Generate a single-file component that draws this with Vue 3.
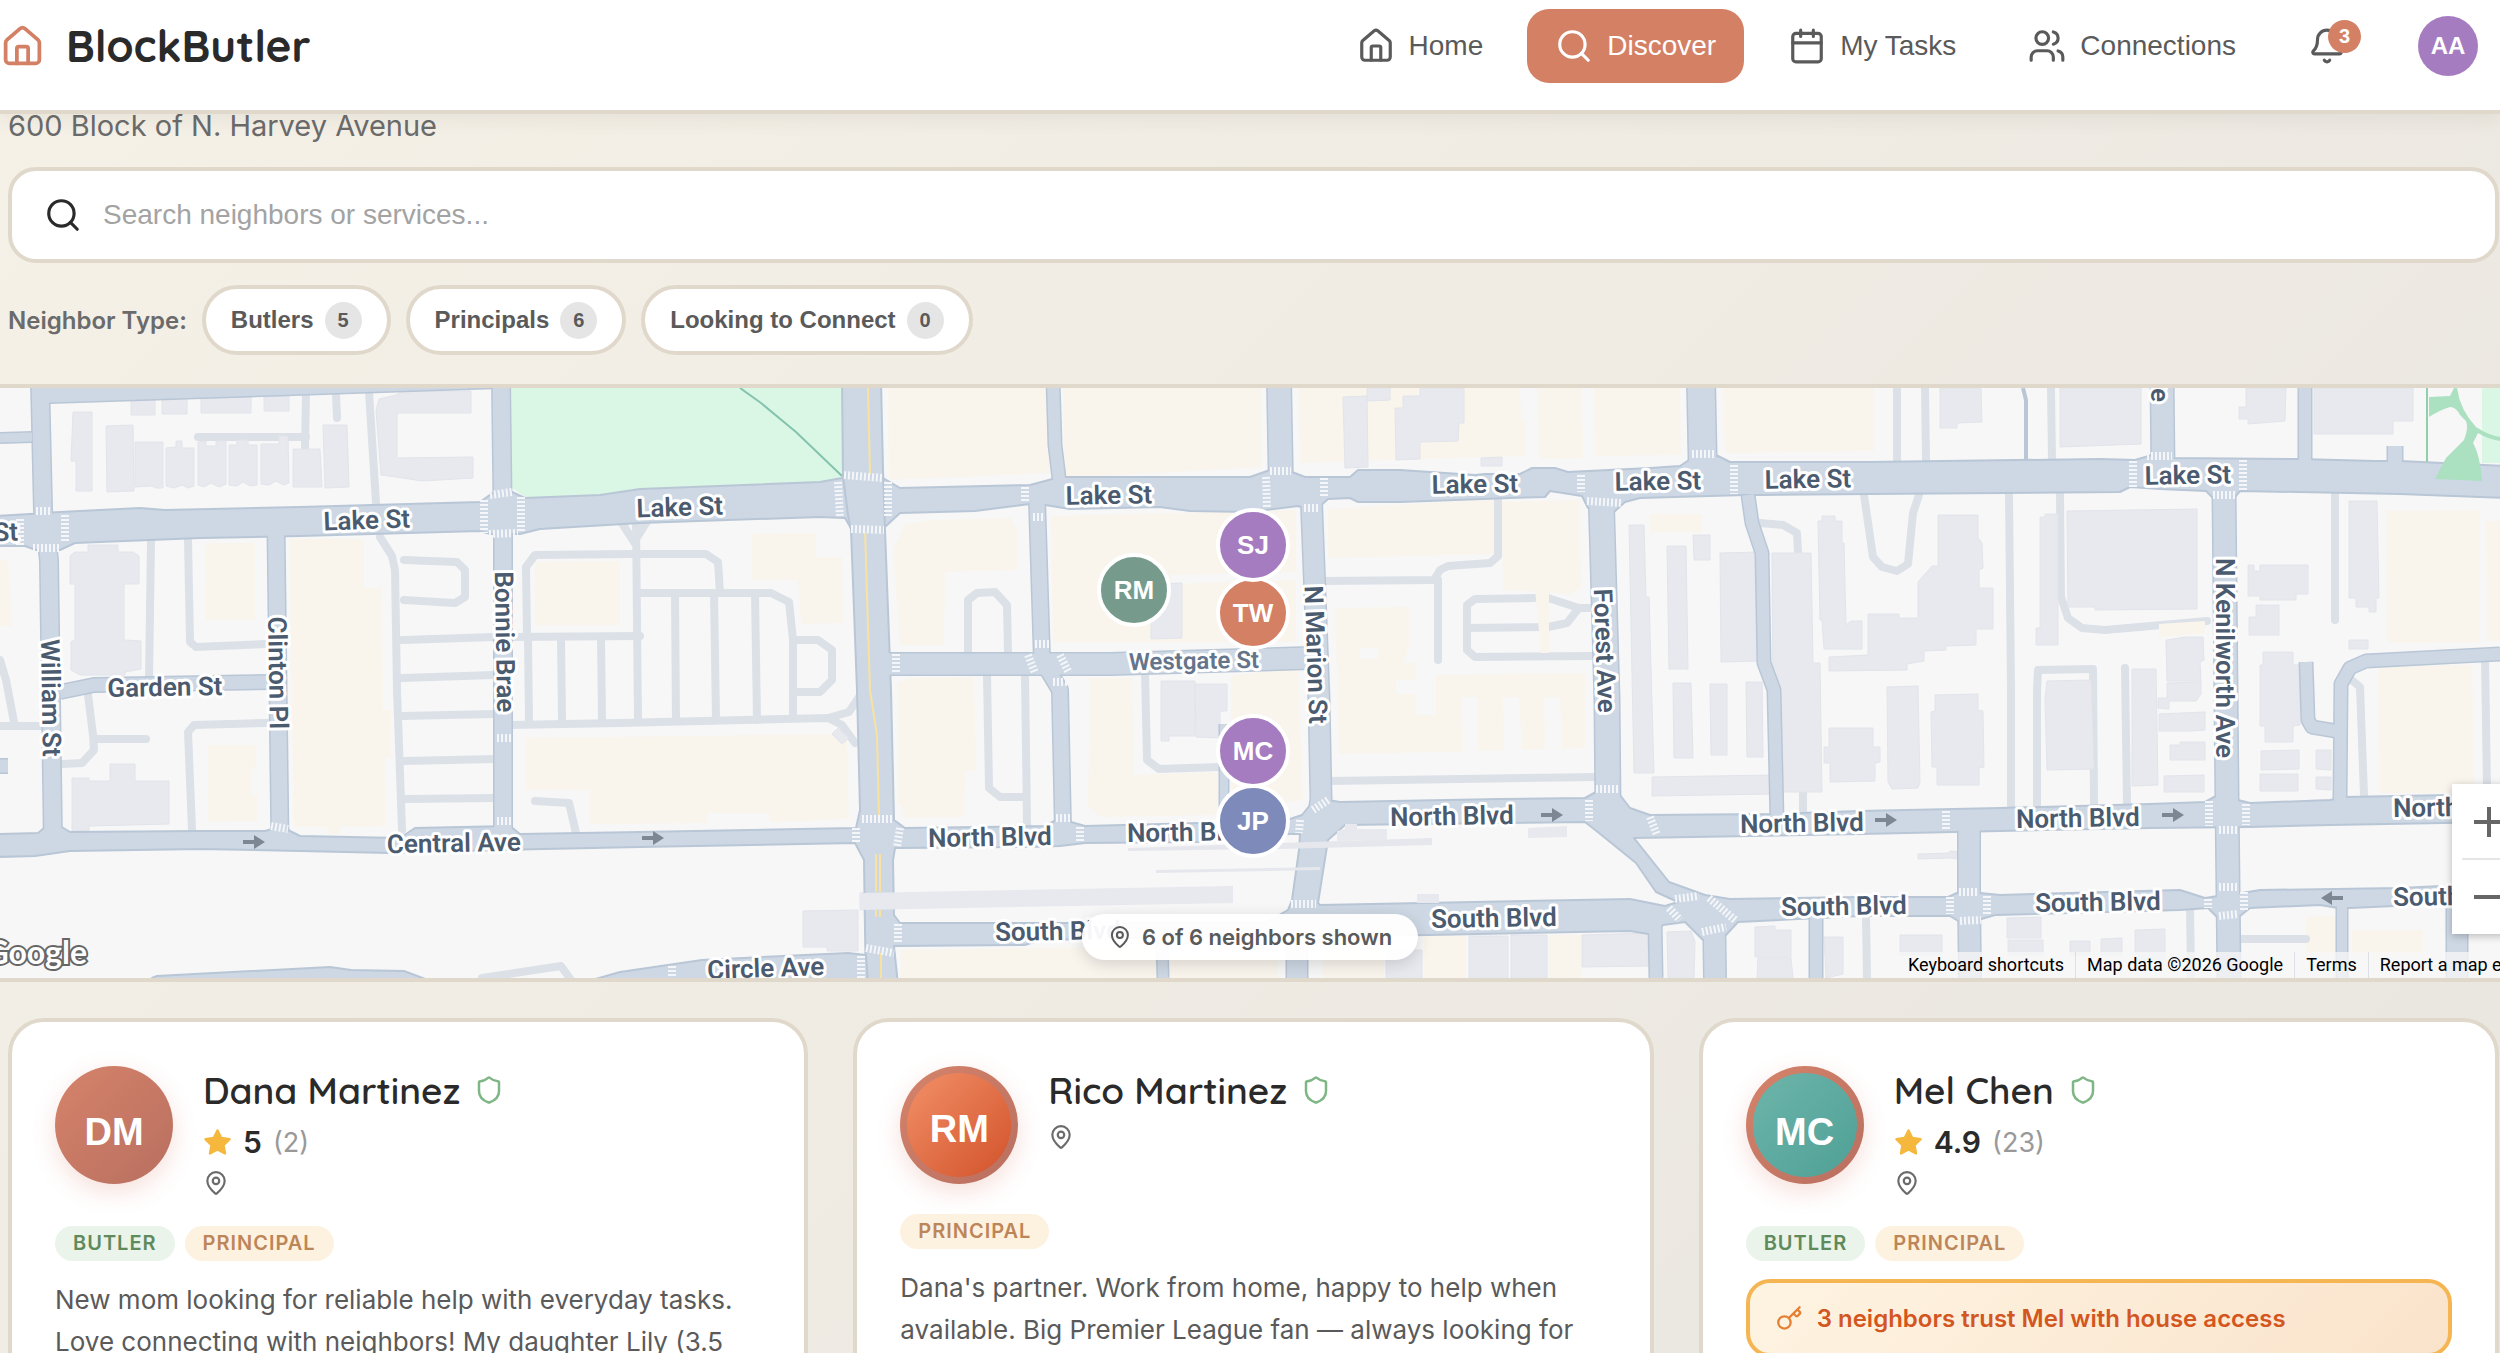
<script setup>
import { ref } from 'vue'

const query = ref('')

const navItems = [
  { id: 'home', label: 'Home' },
  { id: 'search', label: 'Discover', active: true },
  { id: 'calendar', label: 'My Tasks' },
  { id: 'users', label: 'Connections' },
]

const filters = [
  { label: 'Butlers', count: 5 },
  { label: 'Principals', count: 6 },
  { label: 'Looking to Connect', count: 0 },
]

const neighbors = [
  {
    name: 'Dana Martinez', initials: 'DM', tone: 'plain', rating: '5', reviews: 2,
    roles: ['Butler', 'Principal'],
    bio: 'New mom looking for reliable help with everyday tasks. Love connecting with neighbors! My daughter Lily (3.5',
  },
  {
    name: 'Rico Martinez', initials: 'RM', tone: 'ember',
    roles: ['Principal'],
    bio: "Dana's partner. Work from home, happy to help when available. Big Premier League fan — always looking for",
  },
  {
    name: 'Mel Chen', initials: 'MC', tone: 'teal', rating: '4.9', reviews: 23,
    roles: ['Butler', 'Principal'],
    trust: '3 neighbors trust Mel with house access',
  },
]

const pins = [
  { initials: 'RM', x: 1134, y: 590, color: '#769b8c' },
  { initials: 'TW', x: 1253, y: 613, color: '#d38065' },
  { initials: 'SJ', x: 1253, y: 545, color: '#a67cc0' },
  { initials: 'MC', x: 1253, y: 751, color: '#a67cc0' },
  { initials: 'JP', x: 1253, y: 821, color: '#7e8bba' },
]
const pinStyle = (p) => ({
  left: (p.x / 2500) * 100 + '%',
  top: p.y - 388 + 'px',
  backgroundColor: p.color,
})

const shops = [
  '206,543 255,543 255,620 206,620', '289,539 361,539 364,543 364,588 382,588 383,710 391,710 391,757 385,757 385,826 340,827 340,834 328,834 328,827 294,827',
  '535,562 620,561 620,625 535,625', '208,745 256,745 256,764 251,771 251,795 257,795 257,821 208,822', '0,560 8,560 12,626 0,626',
  '526,738 847,734 849,819 770,822 769,813 708,813 707,823 590,824 590,790 526,790',
  '752,534 816,533 816,557 842,557 843,623 801,624 798,580 752,580', '888,388 1046,388 1050,473 889,480',
  '1063,388 1262,388 1262,467 1065,478', '893,550 905,525 930,520 1010,518 1017,530 1017,570 945,572 944,645 900,645',
  '1051,516 1296,510 1296,574 1296,642 1053,642', '897,683 910,678 974,677 976,770 965,771 964,817 905,818 902,806 897,803',
  '1090,678 1132,678 1134,775 1218,772 1218,815 1100,817 1088,806', '1231,676 1298,668 1303,800 1232,810',
  '901,950 1156,946 1156,978 901,978', '1170,955 1278,955 1278,978 1170,978', '1323,950 1384,950 1384,978 1323,978',
  '1424,935 1466,934 1466,978 1424,978', '1549,935 1581,935 1581,978 1549,978',
  '1298,388 1520,388 1521,421 1525,421 1525,456 1300,463', '1537,388 1582,388 1583,458 1539,459', '1594,388 1680,388 1681,455 1596,456',
  '1723,388 1874,388 1874,451 1725,453', '1328,509 1495,499 1495,554 1328,558', '1502,502 1580,500 1581,588 1570,594 1503,590',
  '1650,514 1702,514 1702,532 1650,532', '1535,588 1549,588 1549,653 1541,653',
  '1335,608 1409,607 1409,648 1403,663 1416,663 1416,715 1436,715 1436,675 1585,673 1585,748 1436,752 1339,754',
  '2386,511 2480,510 2480,642 2387,643', '2486,521 2500,521 2500,641 2487,641', '2378,666 2472,665 2474,793 2380,793',
  '2159,624 2205,621 2205,633 2159,637', '2306,917 2336,916 2336,956 2306,956', '2352,930 2423,930 2423,956 2352,956',
]
const clearings = [
  '1462,697 1478,697 1478,750 1463,751', '1503,697 1519,697 1522,750 1504,750', '1544,697 1560,697 1562,748 1545,749',
  '1360,648 1378,648 1378,659 1360,659', '1396,680 1416,680 1416,694 1396,694',
  '1171,575 1296,572 1296,580 1171,584',
]
const buildings = [
  '73,412 92,412 92,491 76,491 76,461 71,461', '106,426 133,425 134,491 107,492', '131,401 155,400 155,415 131,415', '162,400 187,399 187,414 162,414',
  '201,398 251,397 251,413 201,413', '264,397 289,396 289,411 264,411',
  '135,442 163,442 163,488 156,488 152,486 135,487', '166,448 176,447 176,441 182,441 182,448 194,448 194,486 188,488 182,485 174,488 166,486',
  '198,442 206,441 206,446 216,446 216,441 226,441 226,484 219,487 211,483 204,487 198,485', '229,445 237,445 237,440 248,440 248,445 257,445 257,485 250,486 243,482 237,486 229,485',
  '261,444 279,444 279,436 288,436 289,483 284,485 276,481 269,485 261,484', '293,449 320,449 322,487 293,487', '323,425 347,425 349,487 325,488',
  '379,399 396,395 403,391 471,391 471,413 397,413 397,458 473,457 473,478 422,481 396,477 381,475 376,410',
  '70,556 75,552 88,552 88,545 118,545 118,552 133,552 139,556 139,584 124,584 124,640 141,641 141,669 125,672 125,675 80,675 71,670 71,642 75,640 75,584 70,584',
  '72,778 89,778 89,781 110,781 110,764 135,764 135,781 169,781 169,824 89,826 89,831 72,831',
  '803,911 858,910 858,951 827,951 827,947 803,947', '860,893 1233,886 1233,903 860,910', '1156,870 1320,867 1320,870 1156,873',
  '1128,848 1280,843 1432,838 1432,845 1280,849 1128,851', '1337,831 1345,829 1345,824 1357,824 1357,829 1387,829 1387,840 1337,841', '1528,828 1567,826 1567,837 1528,838',
  '1417,894 1439,894 1439,903 1417,903', '1161,681 1195,681 1195,736 1169,736 1169,741 1161,741', '1195,684 1227,684 1227,711 1220,711 1220,738 1196,737',
  '838,728 849,738 842,744 832,734', '1151,584 1182,583 1182,638 1151,639', '1343,397 1367,396 1368,467 1345,468', '1367,388 1390,388 1390,400 1367,401',
  '1395,408 1403,408 1403,396 1420,396 1420,388 1464,388 1464,423 1459,423 1458,441 1420,442 1420,459 1396,460', '1481,458 1502,457 1502,466 1481,466',
  '1629,525 1644,525 1646,597 1649,597 1654,773 1634,773', '1667,546 1686,546 1688,669 1669,669', '1693,535 1710,535 1710,560 1694,560', '1720,553 1758,552 1759,661 1721,662',
  '1772,553 1811,553 1813,663 1820,663 1822,792 1782,792 1779,692 1773,688',
  '1818,521 1822,521 1822,516 1835,516 1835,521 1842,521 1842,543 1844,543 1846,625 1851,621 1862,621 1862,649 1824,649 1822,620 1820,620',
  '1938,515 1978,515 1978,538 1982,543 1983,568 1979,570 1979,588 1993,588 1993,629 1976,629 1976,645 1946,646 1946,650 1924,651 1924,661 1907,664 1907,670 1829,671 1829,657 1868,655 1868,614 1899,614 1899,618 1918,618 1918,582 1932,566 1938,566',
  '1673,683 1691,683 1693,758 1674,758', '1710,684 1727,684 1727,755 1711,755', '1746,682 1762,682 1763,757 1747,757', '1652,777 1773,775 1773,794 1652,796',
  '1829,728 1873,728 1873,747 1880,747 1880,762 1875,763 1875,781 1830,782 1830,763 1824,763 1824,747 1829,747',
  '1469,936 1508,936 1508,978 1469,978', '1511,935 1547,935 1547,978 1511,978', '1582,935 1648,933 1648,966 1582,967', '1386,950 1422,950 1422,978 1386,978',
  '1667,932 1691,931 1695,942 1694,978 1668,978', '1755,927 1775,926 1775,930 1791,930 1791,957 1755,957', '1758,958 1791,958 1793,978 1757,978', '1824,937 1843,937 1843,974 1826,978',
  '1940,388 1981,388 1982,422 1957,423 1957,428 1940,428', '2060,388 2141,388 2141,444 2060,447', '2246,388 2286,388 2285,421 2248,424 2248,419 2239,419 2239,407 2246,407',
  '2314,388 2413,388 2413,421 2393,421 2393,434 2314,434', '2067,511 2197,509 2197,609 2095,610 2095,607 2068,607', '2040,517 2045,517 2045,514 2058,514 2058,645 2036,645 2036,628 2040,628',
  '2248,565 2254,565 2254,571 2260,571 2260,565 2308,565 2308,594 2296,594 2296,600 2260,600 2260,596 2248,596', '2256,605 2279,605 2279,635 2249,635 2249,617 2256,617', '2349,501 2377,501 2379,598 2376,598 2376,612 2369,612 2369,607 2356,607 2356,598 2349,598',
  '2349,640 2368,640 2368,649 2349,649', '2167,640 2185,637 2203,637 2204,660 2200,662 2201,681 2167,681 2166,640', '2263,652 2293,652 2293,665 2300,665 2300,725 2293,726 2293,742 2265,742 2265,726 2260,726 2260,665 2263,665',
  '2132,669 2156,669 2158,785 2132,786', '2047,681 2091,680 2094,769 2047,770 2045,700', '1887,687 1918,686 1920,782 1918,788 1892,789 1888,782', '1935,695 1978,694 1978,710 1983,711 1984,767 1979,768 1979,785 1937,785 1937,767 1932,767 1931,712 1935,711',
  '2159,714 2205,712 2205,730 2190,731 2159,731', '2167,683 2201,682 2201,694 2196,701 2169,701 2169,709 2158,708 2158,698 2167,698', '2170,745 2180,745 2180,742 2205,742 2205,760 2170,760', '2164,776 2204,775 2204,792 2164,792',
  '2261,751 2299,750 2299,769 2261,770', '2260,774 2298,774 2298,791 2260,791', '2316,750 2331,750 2331,770 2316,769', '2316,777 2331,777 2331,790 2316,789',
  '1900,935 1942,935 1942,955 1900,955', '2007,918 2041,917 2041,938 2007,938', '2008,940 2043,940 2043,955 2008,955', '2070,941 2090,941 2090,955 2070,955', '2101,939 2122,938 2122,955 2101,955',
  '2135,930 2165,929 2165,960 2135,960', '1918,854 1949,853 1950,851 1964,852 1961,859 1949,858 1918,859',
]
const lanes = [
  '151,540 149,680', '188,540 190,642 196,647 265,644', '306,393 305,448', '198,437 306,437', '336,393 337,418', '369,392 376,503',
  '380,537 392,556 395,570 397,690 402,830', '404,560 457,562 465,570 465,597 455,603 404,600', '402,640 494,637', '402,678 494,675', '402,716 494,714', '404,761 496,759', '405,799 496,798',
  '527,637 526,567 535,555 631,554 706,554 718,562 720,593', '510,637 640,636', '636,520 638,722', '620,520 634,542 648,520', '640,593 771,593 789,602 793,640 793,713',
  '528,637 529,723', '561,637 562,722', '601,637 602,722', '675,593 676,720', '714,593 716,720', '755,593 757,720', '795,640 818,640 832,650 832,680 820,692 795,692',
  '510,725 620,723 828,718 842,725 855,743', '828,718 849,712 859,697', '88,695 93,735 94,750 82,763 63,764', '96,739 146,739', '267,723 194,725 188,732 192,830',
  '0,660 6,680 14,722', '0,726 41,726', '535,801 569,803 576,833', '482,978 561,966 571,980', '968,653 968,600 977,593 995,592 1007,605 1008,653',
  '987,675 989,788 1000,797 1024,797', '1025,675 1027,825', '1145,673 1147,760 1159,769 1220,767', '1322,581 1434,580 1440,570 1448,566 1490,563 1498,556 1498,495', '1438,580 1438,660',
  '1534,598 1475,599 1467,605 1467,650 1475,657 1591,656', '1467,628 1548,627 1567,623 1579,608 1591,608', '1548,598 1579,608', '1329,781 1595,777',
  '1760,523 1783,525 1797,533 1798,553', '1864,495 1873,557 1882,567 1897,571 1908,564 1913,513 1919,495', '1803,793 1803,813', '1897,388 1897,460', '1925,388 1926,460', '2051,388 2052,460',
  '2009,495 2011,690 2011,807', '2060,495 2061,597 2068,618 2082,628 2105,630 2207,621', '2037,807 2037,690 2038,670 2093,669 2094,805', '2125,668 2127,805', '2335,495 2335,620', '2485,658 2487,790',
  '2348,677 2360,687 2364,795', '2190,905 2191,978', '2238,939 2306,939', '1866,915 1867,978',
]
const sideRoads = [
  ['0,438 32,437', 9], ['0,766 8,766', 13], ['36,396 49,393 294,385 500,378', 19], ['40,380 43,510 49,560 53,845', 17], ['276,530 280,845', 16], ['501,380 503,540 503,840', 17], ['60,692 94,685 272,682', 13],
  ['1053,380 1055,445 1061,495', 12], ['1037,500 1042,660 1060,690 1063,830', 15], ['880,664 1110,664 1310,658', 21],
  ['1279,380 1281,490', 23], ['1311,490 1319,700 1321,800 1312,850 1305,900 1297,930 1297,978', 20], ['1701,380 1703,480', 27], ['1601,490 1607,700 1608,810', 24],
  ['1748,495 1752,523 1762,553 1764,663 1774,690 1777,820', 12], ['2162,380 2163,470', 22], ['2224,490 2227,800 2229,978', 22], ['1969,820 1969,900 1970,978', 21], ['2305,380 2305,465', 12],
  ['2395,446 2395,465', 14], ['2500,654 2366,661 2350,668 2341,684 2340,800', 12], ['2306,662 2308,720 2312,727 2336,731', 12], ['1655,920 1656,978', 12], ['1714,910 1715,978', 21], ['1816,910 1816,978', 12],
  ['2342,900 2342,978', 10], ['2457,900 2457,978', 20], ['1162,940 1163,978', 10], ['1224,724 1224,815', 8],
]
const mainRoads = [
  '-5,516 30,514 60,512 140,508 165,510 300,507 480,502 494,492 512,492 525,498 600,495 640,489 820,482 842,478 883,478 900,488 1030,485 1060,477 1250,477 1270,470 1292,472 1305,477 1350,477 1358,470 1400,470 1475,475 1485,474 1520,474 1532,468 1555,468 1568,472 1650,468 1680,466 1692,458 1718,456 1730,462 1870,462 2100,459 2135,460 2152,455 2173,458 2300,459 2375,461 2400,461 2505,466 2505,498 2400,494 2240,491 2234,498 2213,498 2206,491 2160,489 2130,487 2120,492 1870,494 1764,495 1745,495 1640,498 1625,502 1614,512 1588,508 1582,496 1550,491 1545,497 1510,498 1400,502 1358,502 1350,498 1328,499 1318,508 1304,508 1298,506 1250,512 1190,511 1160,507 1070,509 1045,505 1030,504 975,511 900,513 886,526 852,530 845,518 820,517 640,523 540,529 520,534 490,534 480,531 300,536 200,538 75,543 60,550 36,550 25,546 -5,546',
  '842,380 843,476 848,515 851,530 857,690 860,810 856,828 800,829 640,832 520,834 510,826 415,828 400,838 300,836 286,829 272,829 265,831 200,831 70,832 60,826 44,828 38,833 -5,834 -5,857 35,856 70,851 200,849 300,851 390,853 500,850 640,847 855,843 864,860 865,930 866,985 898,985 894,946 1025,945 1040,940 1290,935 1340,936 1430,935 1630,931 1655,935 1663,925 1685,922 1703,940 1726,935 1738,922 1860,916 1950,916 1965,925 1978,920 1995,915 2180,910 2208,908 2218,918 2240,916 2250,908 2320,905 2338,908 2350,908 2440,904 2505,902 2505,883 2400,888 2260,890 2242,893 2218,896 2205,898 2180,890 2000,895 1980,893 1957,893 1948,897 1860,897 1730,899 1705,895 1669,882 1634,838 1860,834 2000,831 2150,828 2250,827 2330,825 2505,822 2505,795 2450,795 2345,797 2330,800 2250,803 2238,800 2216,796 2205,802 2150,804 2000,808 1860,811 1770,814 1650,815 1630,808 1620,795 1596,792 1585,798 1500,799 1340,802 1328,800 1314,800 1302,815 1290,819 1200,823 1085,826 1071,822 1056,820 1045,826 905,828 894,820 891,690 885,530 883,470 881,380',
  '152,978 157,976 330,967 351,970 404,971 428,980 152,980', '585,982 620,972 702,960 848,953 866,955 868,982',
]
const gaps = [
  '895,848 1030,847 1060,846 1085,843 1200,842 1290,834 1300,834 1299,850 1292,900 1288,910 1265,923 900,923 894,915 893,860',
  '1345,825 1500,823 1585,822 1599,833 1636,863 1656,892 1678,902 1665,906 1630,899 1320,905 1318,903 1328,840',
]
const crossings = [
  '36,511 52,511', '65,515 65,543', '20,519 20,545', '33,548 61,548', '484,500 484,533', '490,495 512,492', '521,497 521,533', '489,534 518,533', '271,826 288,829', '497,738 512,738', '497,821 512,821',
  '844,475 883,478', '838,482 840,518', '888,482 888,518', '851,529 884,530', '1025,487 1025,501', '1033,517 1045,517', '1035,644 1049,644', '896,654 896,672', '1028,655 1035,673', '1060,655 1069,673', '1053,682 1068,682',
  '862,819 894,819', '856,828 856,842', '900,828 897,847', '1056,818 1070,818', '1080,827 1080,841', '898,924 898,944', '866,948 894,953', '861,956 861,978', '672,966 672,978',
  '1270,471 1291,471', '1266,477 1267,507', '1324,478 1324,498', '1304,508 1318,508', '1581,475 1581,492', '1587,501 1621,503', '1692,454 1716,454', '1734,465 1734,494',
  '1313,810 1328,800', '1300,820 1299,833', '1291,904 1316,904', '1589,800 1589,821', '1596,789 1618,789', '1650,817 1657,835', '1675,899 1699,896', '1709,898 1735,920', '1669,908 1680,920', '1702,932 1726,927',
  '2147,456 2172,456', '2133,461 2133,487', '2243,460 2243,491', '2213,495 2235,495', '1946,811 1946,831', '1959,892 1979,892', '1950,897 1950,914', '1987,896 1987,914', '1960,921 1981,920',
  '2209,801 2209,826', '2246,804 2246,825', '2219,830 2239,830', '2219,887 2239,887', '2208,899 2208,908', '2244,892 2244,910', '2219,916 2238,914',
]
const streetNames = [
  ['Lake St', -25, 542, -2], ['Lake St', 367, 529, -2], ['Lake St', 680, 516, -2], ['Lake St', 1109, 504, -1], ['Lake St', 1475, 493, -1], ['Lake St', 1658, 490, -1], ['Lake St', 1808, 488, -1], ['Lake St', 2188, 484, -1],
  ['Garden St', 165, 696, -1], ['Central Ave', 454, 852, -1], ['Circle Ave', 766, 977, -2],
  ['North Blvd', 990, 846, -1], ['North Blvd', 1189, 841, -1], ['North Blvd', 1452, 825, -1], ['North Blvd', 1802, 832, -1], ['North Blvd', 2078, 827, -1], ['North Blvd', 2455, 816, -1],
  ['South Blvd', 1058, 940, -1], ['South Blvd', 1494, 927, -1], ['South Blvd', 1844, 915, -1], ['South Blvd', 2098, 911, -1], ['South Blvd', 2456, 905, -1],
  ['Westgate St', 1194, 669, -1],
  ['William St', 42, 698, 89], ['Clinton Pl', 269, 673, 89], ['Bonnie Brae', 496, 642, 89], ['N Marion St', 1307, 655, 88], ['Forest Ave', 1596, 651, 88], ['N Kenilworth Ave', 2216, 658, 90], ['N Kenilworth Ave', 2151, 302, 90],
]
const arrows = [[254, 842, 0], [653, 838, 0], [1552, 815, 0], [1886, 820, 0], [2173, 815, 0], [2332, 898, 180]]
</script>

<template>
  <div class="page">
    <header class="topbar">
      <a class="brand" href="#">
        <svg class="brand-icon" viewBox="0 0 24 24"><path d="M15 21v-8a1 1 0 0 0-1-1h-4a1 1 0 0 0-1 1v8" /><path d="M3 10a2 2 0 0 1 .7-1.5l7-6a2 2 0 0 1 2.6 0l7 6A2 2 0 0 1 21 10v9a2 2 0 0 1-2 2H5a2 2 0 0 1-2-2z" /></svg>
        <span>BlockButler</span>
      </a>
      <nav class="nav">
        <button v-for="item in navItems" :key="item.id" type="button" class="nav-item" :class="{ active: item.active }">
          <svg class="nav-icon" viewBox="0 0 24 24">
            <template v-if="item.id === 'home'"><path d="M15 21v-8a1 1 0 0 0-1-1h-4a1 1 0 0 0-1 1v8" /><path d="M3 10a2 2 0 0 1 .7-1.5l7-6a2 2 0 0 1 2.6 0l7 6A2 2 0 0 1 21 10v9a2 2 0 0 1-2 2H5a2 2 0 0 1-2-2z" /></template>
            <template v-else-if="item.id === 'search'"><circle cx="11" cy="11" r="8" /><path d="m21 21-4.3-4.3" /></template>
            <template v-else-if="item.id === 'calendar'"><path d="M8 2v4M16 2v4M3 10h18" /><rect x="3" y="4" width="18" height="18" rx="2" /></template>
            <template v-else><path d="M16 21v-2a4 4 0 0 0-4-4H6a4 4 0 0 0-4 4v2" /><circle cx="9" cy="7" r="4" /><path d="M22 21v-2a4 4 0 0 0-3-3.87M16 3.13a4 4 0 0 1 0 7.75" /></template>
          </svg>
          {{ item.label }}
        </button>
        <button type="button" class="nav-item bell" aria-label="Notifications">
          <svg class="nav-icon" viewBox="0 0 24 24"><path d="M10.3 21a1.94 1.94 0 0 0 3.4 0" /><path d="M3.3 15.3A1 1 0 0 0 4 17h16a1 1 0 0 0 .7-1.7C19.4 14 18 12.500 18 8A6 6 0 0 0 6 8c0 4.500-1.400 6-2.700 7.300" /></svg>
          <span class="bell-count">3</span>
        </button>
        <button type="button" class="account">AA</button>
      </nav>
    </header>

    <main>
      <section class="finder">
        <p class="block-name">600 Block of N. Harvey Avenue</p>
        <label class="search">
          <svg class="nav-icon" viewBox="0 0 24 24"><circle cx="11" cy="11" r="8" /><path d="m21 21-4.3-4.3" /></svg>
          <input v-model="query" type="text" placeholder="Search neighbors or services..." aria-label="Search neighbors or services" />
        </label>
        <div class="filters">
          <span class="filters-label">Neighbor Type:</span>
          <button v-for="f in filters" :key="f.label" type="button" class="chip">{{ f.label }}<span class="chip-count">{{ f.count }}</span></button>
        </div>
      </section>

      <section class="map" aria-label="Neighborhood map">
        <svg class="map-canvas" viewBox="0 388 2500 590" preserveAspectRatio="xMidYMid slice">
          <rect x="0" y="388" width="2500" height="590" fill="#f7f7f7" />
          <g class="shops"><polygon v-for="p in shops" :key="p" :points="p" /></g>
          <g fill="#f7f7f7"><polygon v-for="p in clearings" :key="p" :points="p" /></g>
          <g fill="#daf6e4">
            <polygon points="510,388 842,388 843,476 834,481 634,489 600,495 527,498 512,488" />
            <rect x="2482" y="388" width="18" height="75" />
          </g>
          <g class="lanes"><polyline v-for="p in lanes" :key="p" :points="p" /></g>
          <g class="lot"><polygon v-for="p in buildings" :key="p" :points="p" /></g>
          <g class="shops">
            <polygon points="1535,588 1549,588 1549,653 1541,653" />
            <polygon points="2159,624 2205,621 2205,633 2159,637" />
          </g>
          <g class="curbs"><polyline v-for="r in sideRoads" :key="r[0]" :points="r[0]" :stroke-width="r[1] + 3" /></g>
          <g class="arterial"><polygon v-for="p in mainRoads" :key="p" :points="p" /></g>
          <g class="inner"><polygon v-for="p in gaps" :key="p" :points="p" /></g>
          <g class="roads"><polyline v-for="r in sideRoads" :key="r[0]" :points="r[0]" :stroke-width="r[1]" /></g>
          <polygon points="860,893 1233,886 1233,903 860,910" fill="#e8e9ee" />
          <polygon points="1128,848 1280,843 1432,838 1432,845 1280,849 1128,851" fill="#e5e7ec" />
          <polygon points="1156,870 1320,867 1320,870 1156,873" fill="#e5e7ec" />
          <polygon points="1337,831 1345,829 1345,824 1357,824 1357,829 1387,829 1387,840 1337,841" fill="#e8e9ee" />
          <polygon points="1528,828 1567,826 1567,837 1528,838" fill="#e8e9ee" />
          <polygon points="1417,894 1439,894 1439,903 1417,903" fill="#e8e9ee" />
          <polyline points="2023,388 2026,400 2026,460" fill="none" stroke="#b9c6d6" stroke-width="4" />
          <path d="M740 388L761 403L796 432L842 476" fill="none" stroke="#84c3ae" stroke-width="2" />
          <path d="M2427 388V462" stroke="#8fd0ab" stroke-width="2" />
          <path d="M2429 397L2450 396L2454 388H2457Q2460 410 2476 427Q2488 435 2500 437V441Q2488 439 2478 433L2473 443Q2480 455 2482 481L2435 479L2446 458L2464 440Q2469 427 2466 421L2460 415Q2456 407 2450 407Q2440 410 2429 417Z" fill="#abe0c1" />
          <path d="M868 388L870 474M865 531L870 690L877 735L879 817M876 854V892M880 854V892M876 910V917M880 910V917M881 953V978" fill="none" stroke="#f9e2a0" stroke-width="2" />
          <g class="crossings"><polyline v-for="p in crossings" :key="p" :points="p" /></g>
          <g fill="#7d8793"><path v-for="a in arrows" :key="a[0]" d="M-11 -2H0V-7L11 0L0 7V2H-11Z" :transform="`translate(${a[0]} ${a[1]}) rotate(${a[2]})`" /></g>
          <g class="street-names">
            <text v-for="s in streetNames" :key="s[0] + s[1]" :class="{ minor: s[0] === 'Westgate St' }" :transform="`translate(${s[1]} ${s[2]}) rotate(${s[3]})`">{{ s[0] }}</text>
          </g>
          <text class="map-brand" x="87" y="964">Google</text>
        </svg>

        <button v-for="p in pins" :key="p.initials" type="button" class="pin" :style="pinStyle(p)">{{ p.initials }}</button>

        <div class="zoom">
          <button type="button" aria-label="Zoom in"><svg viewBox="0 0 30 30"><path d="M0 15H30M15 0V30" /></svg></button>
          <button type="button" aria-label="Zoom out"><svg viewBox="0 0 30 30"><path d="M0 15H30" /></svg></button>
        </div>

        <div class="map-status">
          <svg class="line-icon" viewBox="0 0 24 24"><path d="M20 10c0 5-5.500 10.200-7.400 11.800a1 1 0 0 1-1.200 0C9.500 20.200 4 15 4 10a8 8 0 0 1 16 0" /><circle cx="12" cy="10" r="3" /></svg>
          6 of 6 neighbors shown
        </div>

        <div class="map-credits">
          <button type="button">Keyboard shortcuts</button>
          <span>Map data ©2026 Google</span>
          <a href="#">Terms</a>
          <a href="#">Report a map error</a>
        </div>
      </section>

      <section class="cards">
        <article v-for="n in neighbors" :key="n.name" class="card">
          <div class="card-head">
            <div class="avatar" :class="n.tone"><span>{{ n.initials }}</span></div>
            <div class="who">
              <h3 class="name">{{ n.name }}
                <svg class="shield" viewBox="0 0 24 24"><path d="M20 13c0 5-3.500 7.500-7.700 9a1 1 0 0 1-.7 0C7.500 20.500 4 18 4 13V6a1 1 0 0 1 1-1c2 0 4.500-1.200 6.200-2.700a1.200 1.200 0 0 1 1.500 0C14.500 3.800 17 5 19 5a1 1 0 0 1 1 1z" /></svg>
              </h3>
              <div v-if="n.rating" class="rating">
                <svg class="star" viewBox="0 0 24 24"><path d="M12 2l3.100 6.300 6.900 1-5 4.900 1.200 6.800L12 17.800 5.800 21 7 14.200 2 9.300l6.900-1z" /></svg>
                <strong>{{ n.rating }}</strong>
                <span>({{ n.reviews }})</span>
              </div>
              <svg class="line-icon place" viewBox="0 0 24 24"><path d="M20 10c0 5-5.500 10.200-7.400 11.800a1 1 0 0 1-1.200 0C9.500 20.200 4 15 4 10a8 8 0 0 1 16 0" /><circle cx="12" cy="10" r="3" /></svg>
            </div>
          </div>
          <div class="roles">
            <span v-for="r in n.roles" :key="r" class="role" :class="r.toLowerCase()">{{ r }}</span>
          </div>
          <div v-if="n.trust" class="trust">
            <svg class="key" viewBox="0 0 24 24"><path d="m15.500 7.500 2.300 2.300a1 1 0 0 0 1.400 0l2.100-2.100a1 1 0 0 0 0-1.400L19 4M21 2l-9.600 9.600" /><circle cx="7.500" cy="15.500" r="5.500" /></svg>
            {{ n.trust }}
          </div>
          <p v-if="n.bio" class="bio">{{ n.bio }}</p>
        </article>
      </section>
    </main>
  </div>
</template>

<style>
body { overflow: hidden; }
</style>

<style scoped>
* { box-sizing: border-box; }
button { border: 0; background: none; padding: 0; cursor: pointer; }
.page {
  height: 100vh;
  overflow: hidden;
  background: linear-gradient(135deg, #f5f1e7, #e9e6e0);
  color: #2a2a2a;
  font-family: Inter, sans-serif;
}
.topbar {
  position: relative;
  z-index: 2;
  display: flex;
  justify-content: space-between;
  align-items: center;
  padding: 9px 22px 27px 0;
  background: #fff;
  border-bottom: 4px solid #e0d9cb;
  box-shadow: 0 4px 20px rgba(60, 50, 40, 0.08);
}
.brand {
  display: flex;
  align-items: center;
  gap: 21px;
  color: #2a2a2a;
  font: 700 44px/56px Quicksand, Lato, sans-serif;
  text-decoration: none;
}
svg { display: block; flex: none; }
.brand-icon, .nav-icon, .line-icon, .shield, .key {
  fill: none;
  stroke: currentColor;
  stroke-width: 2;
  stroke-linecap: round;
  stroke-linejoin: round;
}
.brand-icon { width: 45px; color: #d38065; }
.nav-icon { width: 38px; }
.nav { display: flex; align-items: center; gap: 16px; }
.nav-item {
  position: relative;
  display: flex;
  align-items: center;
  gap: 14px;
  height: 74px;
  padding: 0 28px;
  border-radius: 22px;
  color: #5a5a5a;
  font: 400 28px/34px "Liberation Sans", Arial, sans-serif;
}
.nav-item.active { background: #d38065; color: #fff; }
.bell-count {
  position: absolute;
  top: 11px;
  right: 13px;
  width: 33px;
  height: 33px;
  border-radius: 50%;
  background: #d38065;
  color: #fff;
  font: 700 20px/33px "Liberation Sans", Arial, sans-serif;
  text-align: center;
}
.account {
  width: 60px;
  height: 60px;
  margin-left: 28px;
  border-radius: 50%;
  background: #a67cc0;
  color: #fff;
  font: 700 24px/60px "Liberation Sans", Arial, sans-serif;
}
.finder { padding: 0 1px 29px 8px; }
.block-name { margin: 0 0 29px; color: #6b6b6b; font-size: 29px; line-height: 24px; }
.search {
  display: flex;
  align-items: center;
  gap: 21px;
  height: 96px;
  padding: 0 32px;
  border: 4px solid #e0d9cb;
  border-radius: 28px;
  background: #fff;
}
.search input {
  flex: 1;
  padding: 0;
  border: 0;
  outline: 0;
  background: none;
  color: #2a2a2a;
  font: 400 28px/36px "Liberation Sans", Arial, sans-serif;
}
.search input::placeholder { color: #a3a3a3; opacity: 1; }
.filters { display: flex; align-items: center; gap: 15px; margin-top: 22px; }
.filters-label { color: #6b6b6b; font-size: 24px; font-weight: 600; }
.chip {
  display: flex;
  align-items: center;
  gap: 11px;
  height: 70px;
  padding: 0 25px;
  border: 4px solid #e0d9cb;
  border-radius: 35px;
  background: #fff;
  color: #5a5a5a;
  font: 700 24px/30px "Liberation Sans", Arial, sans-serif;
}
.chip-count {
  width: 37px;
  height: 37px;
  border-radius: 50%;
  background: #e5e5e5;
  font-size: 20px;
  line-height: 37px;
}
.map {
  position: relative;
  overflow: hidden;
  border-top: 4px solid #e0d9cb;
  border-bottom: 4px solid #e0d9cb;
}
.map-canvas { width: 100%; height: 590px; }
.shops { fill: #f9f5ed; }
.lanes { fill: none; stroke: #dce1e8; stroke-width: 8; stroke-linecap: round; stroke-linejoin: round; }
.lot { fill: #e8e9ee; stroke: #e1e4ea; stroke-width: 1; }
.curbs { fill: none; stroke: #b9c6d6; stroke-linejoin: round; }
.roads { fill: none; stroke: #cdd8e4; stroke-linejoin: round; }
.arterial { fill: #cdd8e4; stroke: #b9c6d6; stroke-width: 2; stroke-linejoin: round; }
.inner { fill: #f7f7f7; stroke: #b9c6d6; stroke-width: 2; stroke-linejoin: round; }
.crossings { fill: none; stroke: #f4f6f9; stroke-width: 8; stroke-dasharray: 2 2; }
.street-names text {
  fill: #4b5b6f;
  stroke: #fff;
  stroke-width: 6;
  stroke-linejoin: round;
  paint-order: stroke;
  font: 600 26px Roboto, sans-serif;
  text-anchor: middle;
}
.street-names .minor { fill: #64748b; font-size: 24px; }
.map-brand {
  fill: #fff;
  stroke: #666;
  stroke-width: 4;
  paint-order: stroke;
  font: 700 32px Lato, sans-serif;
  text-anchor: end;
}
.pin {
  position: absolute;
  width: 74px;
  height: 74px;
  border: 4px solid #fff;
  border-radius: 50%;
  color: #fff;
  font: 700 26px/66px "Liberation Sans", Arial, sans-serif;
  transform: translate(-50%, -50%);
}
.zoom {
  position: absolute;
  top: 396px;
  right: -32px;
  width: 80px;
  background: #fff;
  box-shadow: 0 2px 8px rgba(0, 0, 0, 0.25);
}
.zoom button { display: flex; width: 100%; height: 75px; padding-left: 22px; align-items: center; }
.zoom button + button::before { content: ""; position: absolute; top: 74px; left: 10px; right: 10px; height: 2px; background: #e6e6e6; }
.zoom svg { width: 30px; fill: none; stroke: #666; stroke-width: 4; }
.map-status {
  position: absolute;
  bottom: 18px;
  left: 50%;
  display: flex;
  align-items: center;
  gap: 10px;
  height: 46px;
  padding: 0 26px;
  border-radius: 23px;
  background: rgba(255, 255, 255, 0.95);
  box-shadow: 0 4px 16px rgba(0, 0, 0, 0.15);
  color: #5a5a5a;
  font-size: 22px;
  font-weight: 600;
  white-space: nowrap;
  transform: translateX(-50%);
}
.map-status .line-icon { width: 24px; }
.map-credits {
  position: absolute;
  right: -41px;
  bottom: 0;
  display: flex;
  height: 26px;
  background: rgba(247, 247, 247, 0.75);
}
.map-credits > * { padding: 0 11px; color: #000; font: 400 18px/26px Roboto, sans-serif; text-decoration: none; }
.map-credits > * + * { border-left: 1px solid #dcdfe4; }
.cards {
  display: grid;
  grid-template-columns: repeat(3, minmax(0, 1fr));
  gap: 45px;
  padding: 36px 1px 0 8px;
}
.card {
  min-height: 400px;
  padding: 44px 43px;
  border: 4px solid #e0d9cb;
  border-radius: 36px;
  background: #fff;
}
.card-head { display: flex; align-items: flex-start; gap: 30px; }
.avatar {
  display: flex;
  flex: none;
  width: 118px;
  height: 118px;
  padding: 7px;
  border-radius: 50%;
  background: linear-gradient(135deg, #d6836a, #b86f60);
  box-shadow: 0 8px 24px rgba(211, 100, 75, 0.2);
}
.avatar span {
  flex: 1;
  border-radius: 50%;
  color: #fff;
  font: 700 38px/118px "Liberation Sans", Arial, sans-serif;
  text-align: center;
}
.avatar.ember span { background: linear-gradient(135deg, #f29068, #d2522a); line-height: 112px; }
.avatar.teal span { background: linear-gradient(135deg, #6db5ab, #4fa096); }
.who { display: flex; flex-direction: column; gap: 10px; }
.name {
  display: flex;
  align-items: center;
  gap: 14px;
  margin: 0;
  font: 600 37px/48px Quicksand, Lato, sans-serif;
}
.shield { width: 30px; color: #7fb685; }
.rating { display: flex; align-items: center; gap: 11px; height: 36px; font-size: 27px; }
.rating strong { font-weight: 600; font-size: 30px; }
.rating span { color: #999; }
.star { width: 29px; fill: #f5b83d; stroke: #f5b83d; stroke-width: 2; stroke-linejoin: round; }
.place { width: 26px; color: #6b6b6b; }
.roles { display: flex; gap: 10px; margin-top: 30px; }
.role {
  height: 35px;
  padding: 0 18px;
  border-radius: 18px;
  font-size: 20px;
  font-weight: 600;
  line-height: 35px;
  letter-spacing: 1px;
  text-transform: uppercase;
}
.role.butler { background: #eaf4ea; color: #5f8a5c; }
.role.principal { background: #fdf2e0; color: #bd8659; }
.bio { margin: 18px 0 0; color: #5a5a5a; font-size: 26px; line-height: 42px; }
.trust {
  display: flex;
  align-items: center;
  gap: 14px;
  height: 78px;
  margin-top: 18px;
  padding: 0 26px;
  border: 4px solid #f5b553;
  border-radius: 24px;
  background: linear-gradient(135deg, #fef4e2, #fae3cb);
  color: #d4561f;
  font-size: 24px;
  font-weight: 600;
}
.key { width: 27px; color: #e67e32; }
</style>
